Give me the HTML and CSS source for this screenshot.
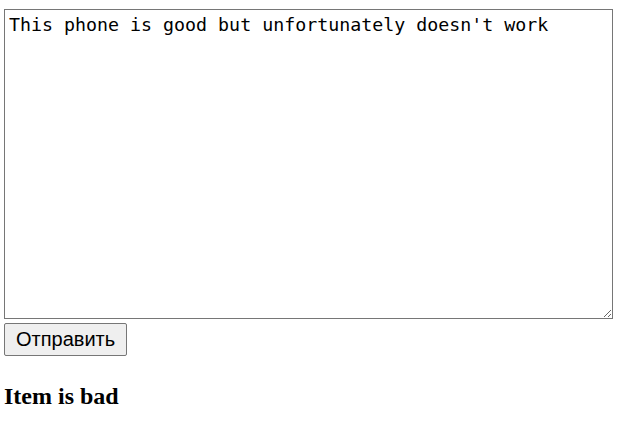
FILE: index.html
```html
<!DOCTYPE html>
<html>
<head>
<meta charset="utf-8">
<link rel="stylesheet" href="styles.css">
</head>
<body>
<form class="form">
<textarea class="review">This phone is good but unfortunately doesn't work</textarea>
<button type="button" class="send">Отправить</button>
</form>
<h3 class="result">Item is bad</h3>
</body>
</html>
```
FILE: styles.css
```css
body {
  margin: 9px 4px;
  font-family: "Liberation Serif", serif;
  background: #fff;
}
.form {
  display: flex;
  flex-direction: column;
  align-items: flex-start;
  gap: 4px;
}
.review {
  box-sizing: border-box;
  width: 609px;
  height: 310px;
  margin: 0;
  padding: 4px 4px;
  border: 1px solid #767676;
  font-family: "DejaVu Sans Mono", monospace;
  font-size: 18.3px;
  line-height: 22px;
  color: #000;
  resize: both;
}
.send {
  box-sizing: border-box;
  height: 33px;
  margin: 0;
  padding: 1px 11px;
  font-family: "Liberation Sans", sans-serif;
  font-size: 20px;
  color: #000;
  background: #efefef;
  border: 1px solid #767676;
  border-radius: 2px;
}
.result {
  margin: 27px 0 0;
  font-size: 24px;
  font-weight: bold;
}
```
